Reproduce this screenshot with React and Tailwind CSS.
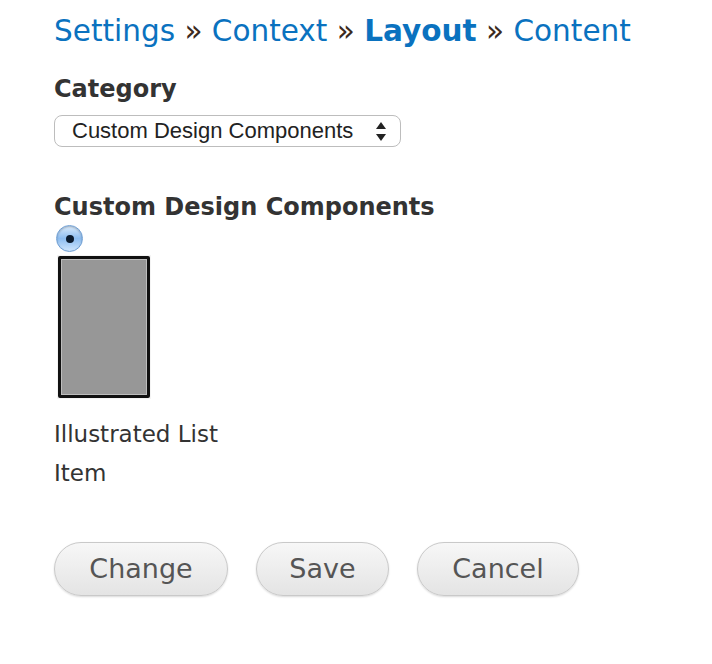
import React from "react";

const font = { fontFamily: '"DejaVu Sans", "Noto Sans", sans-serif' };

const Radio = () => (
  <div className="w-[27px] h-[27px] rounded-full border border-[#6f9fd4] bg-gradient-to-b from-[#dcecfb] via-[#8dbdf0] to-[#cfe6fd] shadow-[inset_0_1px_2px_rgba(0,0,0,0.25)] flex items-center justify-center ml-[2px]">
    <div className="w-[8px] h-[8px] rounded-full bg-[#0b1b2e]" />
  </div>
);

const PillButton = ({ children, width }) => (
  <button
    className={`h-[54px] ${width} rounded-full border border-[#c9c9c9] bg-gradient-to-b from-[#f7f7f7] to-[#e4e4e4] text-[27px] text-[#555] shadow-[0_1px_2px_rgba(0,0,0,0.15)]`}
    style={font}
  >
    {children}
  </button>
);

export default function App() {
  return (
    <div className="min-h-[664px] bg-white px-[54px] pt-[12px]" style={font}>
      <h1 className="text-[29.5px] text-[#0a72bf] leading-[38px] whitespace-nowrap">
        Settings <span className="text-[#3b2a20]">»</span> Context{" "}
        <span className="text-[#3b2a20]">»</span>{" "}
        <span className="font-bold">Layout</span>{" "}
        <span className="text-[#3b2a20]">»</span> Content
      </h1>

      <h2 className="mt-[25px] text-[24px] font-bold text-[#333] leading-[28px]">Category</h2>
      <div className="mt-[12px] w-[347px] h-[32px] rounded-[8px] border border-[#bdbdbd] flex items-center justify-between pl-[17px] pr-[14px]">
        <span
          className="text-[22px] text-[#222] leading-none"
          style={{ fontFamily: '"Liberation Sans", Arial, sans-serif' }}
        >
          Custom Design Components
        </span>
        <svg width="10" height="19" viewBox="0 0 10 19">
          <path d="M5 0 L10 7 H0 Z" fill="#222" />
          <path d="M0 12 H10 L5 19 Z" fill="#222" />
        </svg>
      </div>

      <h2 className="mt-[46px] text-[24px] font-bold text-[#333] leading-[28px] whitespace-nowrap">
        Custom Design Components
      </h2>
      <div className="mt-[4px]">
        <Radio />
      </div>
      <div className="mt-[3px] ml-[3px] w-[94px] h-[144px] p-[1px] bg-[#f4f4f4]">
        <div className="w-full h-full border-[3px] border-[#111] rounded-[2px] bg-[#979797] shadow-[inset_0_0_0_1px_#bdbdbd]" />
      </div>

      <div className="mt-[16px] text-[23px] text-[#333] leading-[39px]">
        <div>Illustrated List</div>
        <div>Item</div>
      </div>

      <div className="mt-[49px] flex gap-[28px]">
        <PillButton width="w-[174px]">Change</PillButton>
        <PillButton width="w-[133px]">Save</PillButton>
        <PillButton width="w-[162px]">Cancel</PillButton>
      </div>
    </div>
  );
}
